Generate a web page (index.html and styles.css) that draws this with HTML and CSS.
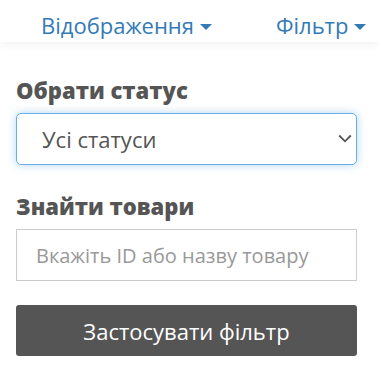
FILE: index.html
```html
<!DOCTYPE html>
<html lang="uk">
<head>
  <meta charset="UTF-8" />
  <meta name="viewport" content="width=device-width, initial-scale=1.0" />
  <title>Фільтр товарів</title>
  <link rel="stylesheet" href="styles.css">
</head>
<body>

  <nav class="top-nav">
    <a href="#" class="nav-link">Відображення <span class="caret"></span></a>
    <a href="#" class="nav-link">Фільтр <span class="caret"></span></a>
  </nav>

  <form class="filter-form">
    <label class="field-label" for="status">Обрати статус</label>
    <div class="select-wrap">
      <select id="status" class="status-select">
        <option>Усі статуси</option>
      </select>
      <svg class="chevron" width="14" height="9" viewBox="0 0 14 9">
        <path d="M1.2 1.5 L7 7.3 L12.8 1.5" fill="none" stroke="#555" stroke-width="1.8" />
      </svg>
    </div>

    <label class="field-label" for="search">Знайти товари</label>
    <input type="text" id="search" class="search-input" placeholder="Вкажіть ID або назву товару" />

    <button type="button" class="apply-btn">Застосувати фільтр</button>
  </form>

</body>
</html>
```

FILE: styles.css
```css
body {
  font-family: 'Open Sans', sans-serif;
  background-color: #fff;
  color: #555;
  margin: 0;
}

.top-nav {
  display: flex;
  align-items: flex-start;
  gap: 64px;
  height: 42px;
  box-sizing: border-box;
  padding: 10px 0 0 41px;
  background: #fff;
  box-shadow: 0 3px 8px rgba(0,0,0,0.05);
}

.nav-link {
  color: #337ab7;
  text-decoration: none;
  font-size: 22px;
  line-height: 30px;
  display: flex;
  align-items: center;
  gap: 6px;
}

.caret {
  width: 0;
  height: 0;
  border-left: 6px solid transparent;
  border-right: 6px solid transparent;
  border-top: 6px solid #337ab7;
  margin-top: 3px;
}

.filter-form {
  display: flex;
  flex-direction: column;
  padding: 33px 22px 0 16px;
}

.field-label {
  font-size: 22px;
  font-weight: 800;
  line-height: 30px;
  color: #555;
  margin-bottom: 8px;
}

.select-wrap {
  position: relative;
  margin-bottom: 26px;
}

.status-select {
  appearance: none;
  width: 100%;
  height: 52px;
  padding: 0 25px;
  font-family: 'Open Sans', sans-serif;
  font-size: 22px;
  color: #555;
  background: #fff;
  border: 1px solid #66afe9;
  border-radius: 5px;
  box-shadow: 0 0 8px rgba(102,175,233,0.5);
  outline: none;
}

.chevron {
  position: absolute;
  right: 5px;
  top: 21px;
  pointer-events: none;
}

.search-input {
  height: 52px;
  padding: 0 19px;
  font-family: 'Open Sans', sans-serif;
  font-size: 20px;
  color: #555;
  border: 1px solid #ccc;
  border-radius: 0;
  box-sizing: border-box;
  margin-bottom: 24px;
}

.search-input::placeholder {
  color: #999;
}

.apply-btn {
  height: 51px;
  background-color: #555;
  color: #fff;
  border: none;
  border-radius: 3px;
  font-family: 'Open Sans', sans-serif;
  font-size: 22px;
  cursor: pointer;
}
```
